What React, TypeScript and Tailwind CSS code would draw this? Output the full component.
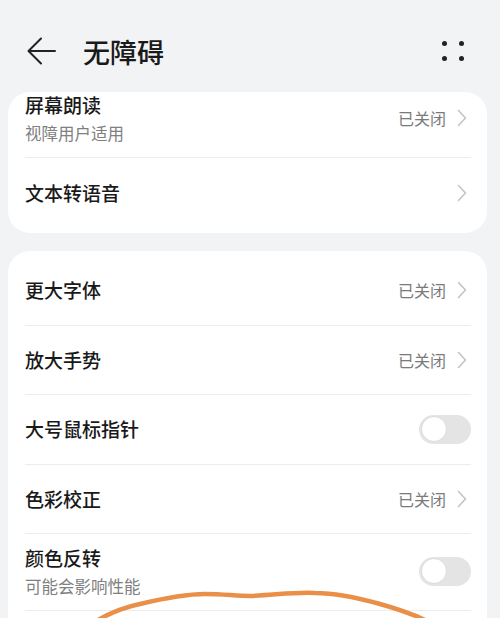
import React from 'react';

const FONT = { fontFamily: '"Noto Sans CJK SC", "Noto Sans", sans-serif' };

const Chevron = () => (
  <svg width="10" height="18" viewBox="0 0 10 18" className="ml-[11px]">
    <path d="M1.5 1.5 L8.5 9 L1.5 16.5" fill="none" stroke="#c4c4c4" strokeWidth="1.6" strokeLinecap="round" strokeLinejoin="round" />
  </svg>
);

const Toggle = () => (
  <div className="w-[52px] h-[29px] rounded-full bg-[#e4e4e4] p-[1.5px] flex items-center">
    <div className="w-[26px] h-[26px] rounded-full bg-white border border-[#dcdcdc]" />
  </div>
);

interface RowProps {
  title: string;
  subtitle?: string;
  right: 'off' | 'chevron' | 'toggle';
  last?: boolean;
  top?: string;
}

const Row = ({ title, subtitle, right, last, top }: RowProps) => (
  <div
    className={`mx-[17px] mr-[16px] flex items-center justify-between ${
      last ? '' : 'border-b border-[#ececec]'
    } ${subtitle ? (top ?? 'pt-[11px]') + ' pb-[13px]' : 'h-[69.5px]'}`}
  >
    <div className="flex flex-col">
      <div className="text-[19px] leading-[26px] text-[#191919] font-medium">{title}</div>
      {subtitle && (
        <div className="mt-[4px] text-[16.5px] leading-[22px] text-[#808080]">{subtitle}</div>
      )}
    </div>
    {right === 'toggle' ? (
      <Toggle />
    ) : (
      <div className="flex items-center mr-[4px]">
        {right === 'off' && <span className="text-[16px] text-[#7a7a7a]">已关闭</span>}
        <Chevron />
      </div>
    )}
  </div>
);

export default function App() {
  return (
    <div className="relative w-[500px] h-[618px] overflow-hidden bg-[#f2f3f5]" style={FONT}>
      {/* Header */}
      <div className="mt-[24px] mb-[14px] h-[54px] flex items-center justify-between pl-[27px] pr-[36px]">
        <div className="flex items-center">
          <svg width="30" height="28" viewBox="0 0 30 28">
            <path d="M2 14 H28 M14 1.5 L1.5 14 L14 26.5" fill="none" stroke="#222" strokeWidth="2" strokeLinecap="round" strokeLinejoin="round" />
          </svg>
          <div className="ml-[26px] text-[27px] leading-none font-medium text-[#1a1a1a]">无障碍</div>
        </div>
        <div className="grid grid-cols-2 gap-x-[12px] gap-y-[10px]">
          <span className="w-[5px] h-[5px] rounded-full bg-[#222]" />
          <span className="w-[5px] h-[5px] rounded-full bg-[#222]" />
          <span className="w-[5px] h-[5px] rounded-full bg-[#222]" />
          <span className="w-[5px] h-[5px] rounded-full bg-[#222]" />
        </div>
      </div>

      {/* Card 1 (scrolled) */}
      <div className="mx-[8px] w-[479px] bg-white rounded-[22px] pb-[5.5px] overflow-hidden">
        <Row title="屏幕朗读" subtitle="视障用户适用" right="off" top="pt-[0px]" />
        <Row title="文本转语音" right="chevron" last />
      </div>

      {/* Card 2 */}
      <div className="mt-[18px] mx-[8px] w-[479px] bg-white rounded-[22px] pt-[5px]">
        <Row title="更大字体" right="off" />
        <Row title="放大手势" right="off" />
        <Row title="大号鼠标指针" right="toggle" />
        <Row title="色彩校正" right="off" />
        <Row title="颜色反转" subtitle="可能会影响性能" right="toggle" />
        <div className="h-[40px]" />
      </div>

      {/* Hand-drawn annotation */}
      <svg className="absolute inset-0 pointer-events-none" width="500" height="618" viewBox="0 0 500 618">
        <path
          d="M98 620 C 112 612, 125 607, 140 604 C 165 598, 185 594, 205 594 C 225 594, 235 596, 250 596 C 275 595, 295 592, 315 593 C 335 593, 355 597, 380 604 C 398 609, 412 614, 425 620"
          fill="none"
          stroke="#e98f48"
          strokeWidth="4.5"
          strokeLinecap="round"
        />
      </svg>
    </div>
  );
}
